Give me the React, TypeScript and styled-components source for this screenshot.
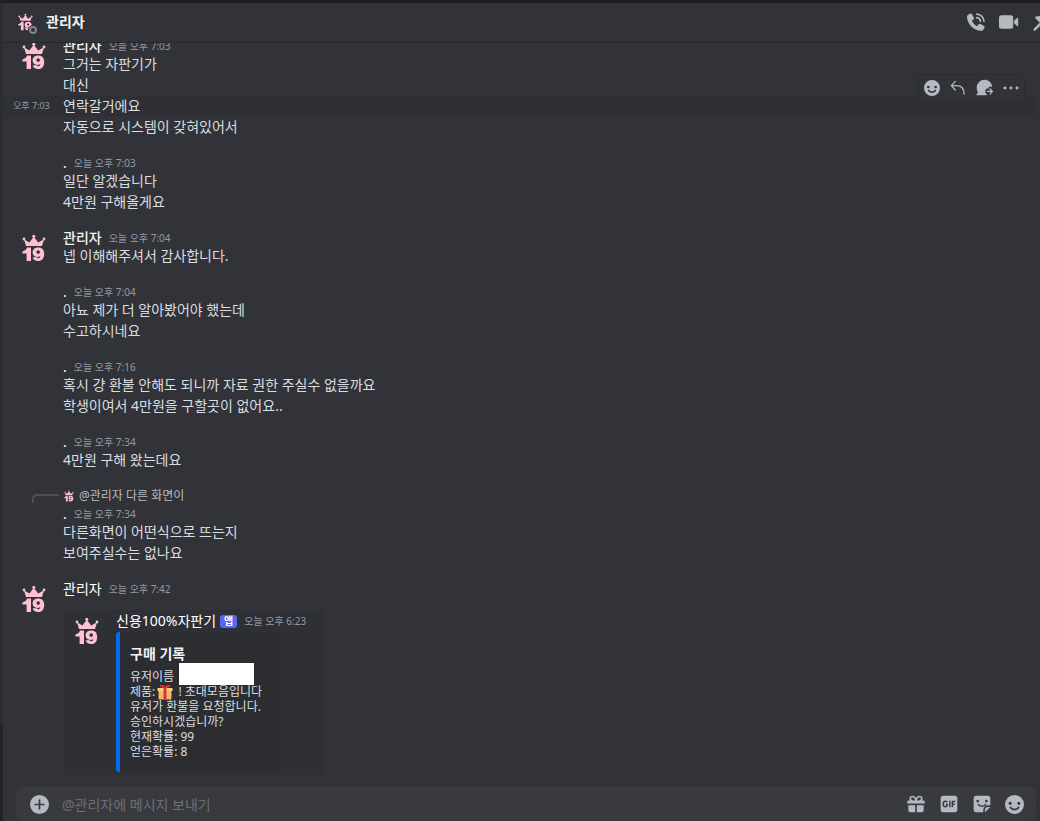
import React from "react";
import styled, { createGlobalStyle, css } from "styled-components";

const Global = createGlobalStyle`
  * { box-sizing: border-box; }
  body {
    margin: 0;
    background: #313338;
    color: #dbdee1;
    font-family: "Noto Sans", "Noto Sans CJK KR", sans-serif;
    font-size: 14px;
  }
  h1, h2, p, ol { margin: 0; padding: 0; font-size: inherit; font-weight: inherit; }
  button { border: 0; padding: 0; background: none; color: inherit; font: inherit; display: flex; cursor: pointer; }
`;

const Window = styled.div`
  height: 100vh;
  display: flex;
  flex-direction: column;
  border-top: 3px solid #1e1f22;
  overflow: hidden;
`;
const Body = styled.div`
  flex: 1;
  min-height: 0;
  display: flex;
`;
const Rail = styled.aside`
  width: 3px;
  display: flex;
  flex-direction: column;
  background: #2b2d31;
`;
const RailFooter = styled.div`
  margin-top: auto;
  height: 96px;
  background: #232428;
`;
const Chat = styled.main`
  flex: 1;
  min-width: 0;
  display: flex;
  flex-direction: column;
`;
const TopBar = styled.header`
  height: 40px;
  flex: none;
  display: flex;
  align-items: center;
  gap: 9px;
  padding: 0 0 2px 15px;
  border-bottom: 1px solid #27282c;
  overflow: hidden;
`;
const TopTitle = styled.h1`
  font-weight: 700;
  line-height: 20px;
  color: #f2f3f5;
  flex: 1;
`;
const StatusAvatar = styled.div`
  position: relative;
  width: 19px;
  height: 18px;
  display: flex;
`;
const StatusDot = styled.span`
  position: absolute;
  right: 0;
  bottom: -3px;
  width: 8px;
  height: 8px;
  border-radius: 50%;
  border: 2px solid #80848e;
  background: #313338;
  box-shadow: 0 0 0 1px #313338;
`;
const TopActions = styled.div`
  display: flex;
  gap: 13px;
  color: #b5bac1;
  flex: none;
  margin-right: -12px;
`;
const Feed = styled.ol`
  flex: 1;
  min-height: 0;
  overflow: hidden;
  display: flex;
  flex-direction: column;
  justify-content: flex-end;
  gap: 19px;
  list-style: none;
  padding-bottom: 12px;
`;
const Group = styled.li`
  flex: none;
  position: relative;
`;
const AvatarSlot = styled.div`
  position: absolute;
  left: 19px;
  top: 3px;
  display: flex;
`;
const Head = styled.div`
  height: 14px;
  line-height: 14px;
  padding-left: 60px;
  display: flex;
  align-items: center;
  gap: 7px;
`;
const Name = styled.span<{ $light?: boolean }>`
  font-weight: ${(p) => (p.$light ? 400 : 500)};
  color: ${(p) => (p.$light ? "#ffffff" : "#f2f3f5")};
`;
const Time = styled.time`
  font-size: 10px;
  color: #949ba4;
`;
const Line = styled.div<{ $active?: boolean }>`
  position: relative;
  line-height: 21px;
  padding-left: 60px;
  margin-right: 4px;
  ${(p) => p.$active && css`background: #2e3035;`}
`;
const GutterTime = styled(Time)`
  position: absolute;
  left: 10px;
  top: 0;
  font-size: 9px;
`;
const Toolbar = styled.div`
  position: absolute;
  right: 11px;
  top: -21px;
  height: 27px;
  padding: 0 5px;
  display: flex;
  align-items: center;
  gap: 10px;
  color: #b5bac1;
  background: #313338;
  border: 1px solid #2b2d31;
  border-radius: 4px;
`;
const Reply = styled.div`
  position: relative;
  height: 14px;
  line-height: 14px;
  margin-bottom: 4px;
  padding-left: 61px;
  display: flex;
  align-items: center;
  gap: 5px;
  font-size: 12px;
  color: #b5bac1;
`;
const Spine = styled.span`
  position: absolute;
  left: 29px;
  top: 5px;
  width: 27px;
  height: 9px;
  border-left: 2px solid #4e5058;
  border-top: 2px solid #4e5058;
  border-top-left-radius: 5px;
`;
const Card = styled.article`
  width: 260px;
  margin: 14px 0 0 60px;
  padding: 4px 0 3px 12px;
  display: flex;
  gap: 17px;
  background: #2e3035;
`;
const CardAvatar = styled.div`
  padding-top: 3px;
`;
const CardHead = styled.div`
  display: flex;
  align-items: center;
  gap: 4px;
  height: 14px;
  line-height: 14px;
  margin-bottom: 4px;
`;
const Tag = styled.span`
  padding: 0 4px;
  margin-right: 3px;
  height: 13px;
  line-height: 12px;
  border-radius: 3px;
  background: #5865f2;
  color: #fff;
  font-size: 10px;
  font-weight: 700;
`;
const Embed = styled.div`
  width: 163px;
  height: 140px;
  padding: 14px 0 0 10px;
  border-left: 4px solid #006cf0;
  border-radius: 3px;
  background: #2b2d31;
  font-size: 12px;
  line-height: 15px;
`;
const EmbedTitle = styled.h2`
  font-size: 14px;
  font-weight: 700;
  color: #f2f3f5;
  margin-bottom: 8px;
`;
const EmbedRow = styled.p`
  position: relative;
  display: flex;
  align-items: center;
  gap: 2px;
  white-space: pre;
  height: 15px;
`;
const Redacted = styled.span`
  position: absolute;
  left: 49px;
  top: -6px;
  width: 75px;
  height: 22px;
  background: #fff;
`;
const Composer = styled.form`
  flex: none;
  height: 34px;
  margin: 0 4px 0 13px;
  padding: 0 12px 0 14px;
  display: flex;
  align-items: center;
  gap: 13px;
  border-radius: 7px;
  background: #383a40;
  color: #b5bac1;
`;
const Input = styled.input`
  flex: 1;
  min-width: 0;
  border: 0;
  padding: 0;
  outline: 0;
  background: none;
  color: #dbdee1;
  font: inherit;
  &::placeholder { color: #6d6f78; opacity: 1; }
`;

const Crown = ({ w = 24 }: { w?: number }) => (
  <svg width={w} height={Math.round((w * 28) / 24)} viewBox="0 0 24 28" fill="#ffc0d3" aria-hidden="true">
    <path d="M4 12 2 5.200 7.400 8.600 11.800 2.800 16.200 8.600 22 5.200 20 12Z" />
    <circle cx="2" cy="5" r="1.400" />
    <circle cx="11.800" cy="2.200" r="1.500" />
    <circle cx="22" cy="5" r="1.400" />
    <path d="M0.400 17.400C3 17 4.300 15.800 5 13.600H9V27H4.600V19.400H0.400Z" />
    <path fillRule="evenodd" d="M16.200 13.400c4.200 0 6 2.700 6 6.500 0 4.300-2.300 7.200-6 7.200-3.200 0-5.200-1.400-5.500-3.800h4c.3.700.8 1 1.600 1 1.200 0 1.800-.8 1.900-2.200-.7.600-1.600.9-2.600.9-2.900 0-5-1.900-5-4.700 0-2.900 2.300-4.900 5.600-4.900zm0 2.900c-1 0-1.700.7-1.700 1.800s.7 1.800 1.700 1.800 1.700-.7 1.700-1.800-.7-1.800-1.700-1.800z" />
  </svg>
);

const Face = ({ s }: { s: number }) => (
  <svg width={s} height={s} viewBox="0 0 24 24" fill="currentColor" aria-hidden="true">
    <path fillRule="evenodd" d="M12 0a12 12 0 1 0 0 24 12 12 0 0 0 0-24zM6.500 8.500a2 2 0 1 1 0 4 2 2 0 0 1 0-4zm11 0a2 2 0 1 1 0 4 2 2 0 0 1 0-4zM6.300 14.800c.5-.4 1.200-.3 1.600.3.9 1.300 2.400 2.100 4.100 2.100s3.200-.8 4.100-2.100c.4-.6 1.100-.7 1.600-.3.6.4.7 1.100.3 1.600a7.200 7.200 0 0 1-12 0c-.4-.5-.3-1.200.3-1.600z" />
  </svg>
);

const Phone = () => (
  <svg width="20" height="20" viewBox="0 0 24 24" fill="currentColor" aria-hidden="true">
    <path d="M2.600 3.200 4.600 2.100c1-.5 2.200-.2 2.700.8l2 3.800c.5.900.2 2-.6 2.600L7.600 10c-.4.300-.5.800-.3 1.200 1.100 2.300 3 4.200 5.400 5.500.4.200.9.100 1.200-.3l1-1.400c.6-.8 1.700-1 2.500-.5l3.900 2.100c1 .5 1.300 1.700.8 2.700l-1.100 1.800c-.6 1-1.800 1.600-3 1.500C9 22 1.900 14.700 1.200 6.200c-.1-1.200.4-2.400 1.400-3z" />
    <path d="M13 2.500c4.700.2 8.300 3.900 8.500 8.600M12.800 6.700c2.500.2 4.300 2 4.500 4.500" fill="none" stroke="currentColor" strokeWidth="2" strokeLinecap="round" />
  </svg>
);
const Video = () => (
  <svg width="20" height="20" viewBox="0 0 24 24" fill="currentColor" aria-hidden="true">
    <rect x="0" y="4" width="17" height="16" rx="3" />
    <path d="m18 10.500 3.800-3.300c.6-.5 1.200-.2 1.200.5v8.600c0 .7-.6 1-1.200.5L18 13.500z" />
  </svg>
);
const Pin = () => (
  <svg width="20" height="20" viewBox="0 0 24 24" fill="currentColor" aria-hidden="true">
    <path d="M4.500 5.500c3-1 5.500.2 7-2.500l9.500 9.500c-2.700 1.500-1.500 4-2.500 7-.3.800-1.300 1-1.900.4L11.500 15l-7 7c-.7.700-1.700.7-2.300.1s-.6-1.600.1-2.300l7-6.800-5.200-5.600c-.6-.6-.4-1.600.4-1.900z" />
  </svg>
);
const BackArrow = () => (
  <svg width="16" height="16" viewBox="0 0 24 24" fill="none" stroke="currentColor" strokeWidth="2" strokeLinecap="round" strokeLinejoin="round" aria-hidden="true">
    <path d="M8 2 2 8.500 8 15M2.500 8.500H10c7 0 11 4.500 11 12.500" />
  </svg>
);
const Forward = () => (
  <svg width="17" height="17" viewBox="0 0 24 24" fill="currentColor" aria-hidden="true">
    <path d="M12 1a11 11 0 0 1 11 10.500l-2-.8c-2-.6-3.600 1-3.200 2.800h-1.600a3 3 0 0 0-3 3v2c0 1.600 1 2.800 2.600 3l-.6 1c-.8.300-1.700.5-2.900.5H1.500c-1 0-1.300-1.200-.6-1.800L3 19.500C1.600 17.500 1 15 1 12A11 11 0 0 1 12 1z" />
    <path d="M16 17.500h7M20 14l3 3.500L20 21" fill="none" stroke="currentColor" strokeWidth="2" strokeLinecap="round" strokeLinejoin="round" />
  </svg>
);
const Dots = () => (
  <svg width="16" height="16" viewBox="0 0 24 24" fill="currentColor" aria-hidden="true">
    <circle cx="3" cy="12" r="2.200" /><circle cx="12" cy="12" r="2.200" /><circle cx="21" cy="12" r="2.200" />
  </svg>
);
const Plus = () => (
  <svg width="19" height="19" viewBox="0 0 24 24" aria-hidden="true">
    <circle cx="12" cy="12" r="12" fill="currentColor" />
    <path d="M12 6.500v11M6.500 12h11" stroke="#383a40" strokeWidth="2.200" strokeLinecap="round" />
  </svg>
);
const Gift = () => (
  <svg width="20" height="20" viewBox="0 0 24 24" fill="currentColor" aria-hidden="true">
    <path fillRule="evenodd" d="M4 5.500C4 3.500 5.600 2 7.600 2c2.200 0 3.600 1.300 4.400 3 .8-1.700 2.200-3 4.400-3C18.400 2 20 3.500 20 5.500c0 .9-.3 1.700-.8 2.300H21c.8 0 1.500.7 1.500 1.500v2.200h-21V9.300c0-.8.7-1.500 1.500-1.500h1.800C4.300 7.200 4 6.400 4 5.500zm3.600-1.500c-.9 0-1.500.6-1.500 1.500 0 1.300 1 2.200 2.400 2.200H11C10.400 5.300 9.300 4 7.600 4zm8.800 0c-1.700 0-2.800 1.300-3.400 3.700h2.500c1.400 0 2.400-.9 2.400-2.200 0-.9-.6-1.500-1.500-1.500z" />
    <path d="M2.800 13.500H11V22H5.200a2.400 2.400 0 0 1-2.400-2.400zM13 13.500h8.200v6.100a2.400 2.400 0 0 1-2.400 2.400H13z" />
  </svg>
);
const Gif = () => (
  <svg width="20" height="20" viewBox="0 0 24 24" aria-hidden="true">
    <rect x="2" y="2" width="20" height="20" rx="3" fill="currentColor" />
    <path d="M10 9.800C9.500 9 8.700 8.700 7.900 8.700 6.200 8.700 5 10.100 5 12s1.200 3.300 2.900 3.300c1.300 0 2.100-.7 2.100-2v-.9H8M13 8v8M16 16V8.900h3.500M16 12.200h3" fill="none" stroke="#383a40" strokeWidth="1.700" />
  </svg>
);
const Sticker = () => (
  <svg width="20" height="20" viewBox="0 0 24 24" aria-hidden="true">
    <path fill="currentColor" d="M5 2h14a3 3 0 0 1 3 3v8.500h-2.500a6 6 0 0 0-6 6V22H5a3 3 0 0 1-3-3V5a3 3 0 0 1 3-3zM22 15.500 15.500 22v-2.500a4 4 0 0 1 4-4z" />
    <circle cx="6.800" cy="8.500" r="1.700" fill="#383a40" /><circle cx="17.200" cy="8.500" r="1.700" fill="#383a40" />
    <path d="M7.500 12.500c2 3 7 3 9 0" fill="none" stroke="#383a40" strokeWidth="1.800" strokeLinecap="round" />
  </svg>
);
const Present = () => (
  <svg width="16" height="16" viewBox="0 0 32 32" aria-hidden="true">
    <path fill="#f4b860" d="M3 13h26v16a2 2 0 0 1-2 2H5a2 2 0 0 1-2-2z" />
    <path fill="#ffd27d" d="M1 8h30v6H1z" />
    <path fill="#dd2e44" d="M13 8h6v23h-6zM16 8C9 8 5 6 6 3c1.500-3 8-2 10 3 2-5 8.500-6 10-3 1 3-3 5-10 5z" />
  </svg>
);

type Msg = { name: string; at: string; lines: string[]; active?: number; quote?: string };
const ADMIN = "관리자";
const messages: Msg[] = [
  { name: ADMIN, at: "7:03", lines: ["그거는 자판기가", "대신", "연락갈거에요", "자동으로 시스템이 갖혀있어서"], active: 2 },
  { name: ".", at: "7:03", lines: ["일단 알겠습니다", "4만원 구해올게요"] },
  { name: ADMIN, at: "7:04", lines: ["넵 이해해주셔서 감사합니다."] },
  { name: ".", at: "7:04", lines: ["아뇨 제가 더 알아봤어야 했는데", "수고하시네요"] },
  { name: ".", at: "7:16", lines: ["혹시 걍 환불 안해도 되니까 자료 권한 주실수 없을까요", "학생이여서 4만원을 구할곳이 없어요.."] },
  { name: ".", at: "7:34", lines: ["4만원 구해 왔는데요"] },
  { name: ".", at: "7:34", lines: ["다른화면이 어떤식으로 뜨는지", "보여주실수는 없나요"], quote: "@관리자 다른 화면이" },
];

const MessageHead = ({ name, at, light }: { name: string; at: string; light?: boolean }) => (
  <>
    {name === ADMIN && <AvatarSlot><Crown /></AvatarSlot>}
    <Head><Name $light={light}>{name}</Name><Time>오늘 오후 {at}</Time></Head>
  </>
);

const HoverTools = () => (
  <Toolbar>
    <button aria-label="반응 추가"><Face s={16} /></button>
    <button aria-label="답장"><BackArrow /></button>
    <button aria-label="전달"><Forward /></button>
    <button aria-label="더 보기"><Dots /></button>
  </Toolbar>
);

export default function App() {
  return (
    <Window>
      <Global />
      <Body>
        <Rail><RailFooter /></Rail>
        <Chat>
          <TopBar>
            <StatusAvatar><Crown w={15} /><StatusDot /></StatusAvatar>
            <TopTitle>관리자</TopTitle>
            <TopActions>
              <button aria-label="음성 통화"><Phone /></button>
              <button aria-label="영상 통화"><Video /></button>
              <button aria-label="고정된 메시지"><Pin /></button>
            </TopActions>
          </TopBar>
          <Feed>
            {messages.map((m, i) => (
              <Group key={i}>
                {m.quote && <Reply><Spine /><Crown w={10} /><span>{m.quote}</span></Reply>}
                <MessageHead name={m.name} at={m.at} />
                {m.lines.map((text, n) => (
                  <Line key={n} $active={m.active === n}>
                    {m.active === n && <GutterTime>오후 {m.at}</GutterTime>}
                    {text}
                    {m.active === n && <HoverTools />}
                  </Line>
                ))}
              </Group>
            ))}
            <Group>
              <MessageHead name={ADMIN} at="7:42" light />
              <Card>
                <CardAvatar><Crown /></CardAvatar>
                <div>
                  <CardHead><Name $light>신용100%자판기</Name><Tag>앱</Tag><Time>오늘 오후 6:23</Time></CardHead>
                  <Embed>
                    <EmbedTitle>구매 기록</EmbedTitle>
                    <EmbedRow>유저이름<Redacted /></EmbedRow>
                    <EmbedRow>제품:<Present /> ! 초대모음입니다</EmbedRow>
                    <EmbedRow>유저가 환불을 요청합니다.</EmbedRow>
                    <EmbedRow>승인하시겠습니까?</EmbedRow>
                    <EmbedRow>현재확률: 99</EmbedRow>
                    <EmbedRow>얻은확률: 8</EmbedRow>
                  </Embed>
                </div>
              </Card>
            </Group>
          </Feed>
          <Composer>
            <button type="button" aria-label="첨부"><Plus /></button>
            <Input aria-label="메시지" placeholder="@관리자에 메시지 보내기" />
            <button type="button" aria-label="선물"><Gift /></button>
            <button type="button" aria-label="GIF"><Gif /></button>
            <button type="button" aria-label="스티커"><Sticker /></button>
            <button type="button" aria-label="이모지"><Face s={19} /></button>
          </Composer>
        </Chat>
      </Body>
    </Window>
  );
}
